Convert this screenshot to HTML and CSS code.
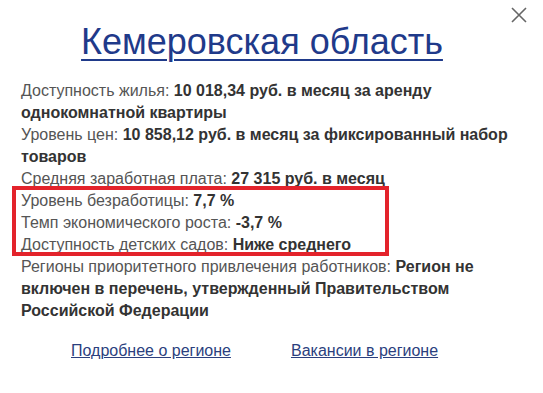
FILE: index.html
```html
<!DOCTYPE html>
<html lang="ru">
<head>
<meta charset="utf-8">
<link rel="stylesheet" href="styles.css">
</head>
<body>
<div class="popup">
  <button class="close" aria-label="Закрыть">
    <svg width="16" height="16" viewBox="0 0 16 16"><path d="M1 1L15 15M15 1L1 15" stroke="#666" stroke-width="1.6" fill="none"/></svg>
  </button>
  <h1 class="title"><a href="#">Кемеровская область</a></h1>
  <div class="info">
    <p class="row">Доступность жилья: <b>10 018,34 руб. в месяц за аренду однокомнатной квартиры</b></p>
    <p class="row">Уровень цен: <b>10 858,12 руб. в месяц за фиксированный набор товаров</b></p>
    <p class="row">Средняя заработная плата: <b>27 315 руб. в месяц</b></p>
    <p class="row">Уровень безработицы: <b>7,7 %</b></p>
    <p class="row">Темп экономического роста: <b>-3,7 %</b></p>
    <p class="row">Доступность детских садов: <b>Ниже среднего</b></p>
    <p class="row">Регионы приоритетного привлечения работников: <b>Регион не включен в перечень, утвержденный Правительством Российской Федерации</b></p>
    <div class="highlight"></div>
  </div>
  <div class="links">
    <a href="#">Подробнее о регионе</a>
    <a href="#">Вакансии в регионе</a>
  </div>
</div>
</body>
</html>
```
FILE: styles.css
```css
* { box-sizing: border-box; }
html, body { margin: 0; padding: 0; background: #fff; }
body { font-family: "Liberation Sans", Arial, sans-serif; }
.popup {
  position: relative;
  width: 543px;
  height: 393px;
  padding: 21px 20px 0 21px;
}
.close {
  position: absolute;
  top: 7px;
  right: 16px;
  width: 16px;
  height: 16px;
  padding: 0;
  border: 0;
  background: none;
  cursor: pointer;
}
.close svg { display: block; }
.title {
  margin: 0;
  padding-right: 20px;
  text-align: center;
  font-weight: normal;
  font-size: 36px;
  line-height: 42px;
}
.title a { color: #1f3a8a; text-decoration: underline; text-decoration-thickness: 2px; text-underline-offset: 5px; }
.info { position: relative; margin-top: 17px; font-size: 16px; line-height: 22px; color: #555; }
.row { margin: 0; }
.row b { color: #333; }
.highlight {
  position: absolute;
  left: -9px;
  top: 106px;
  width: 377px;
  height: 70px;
  border: 4px solid #e3232b;
  pointer-events: none;
}
.links {
  display: flex;
  gap: 60px;
  padding-left: 50px;
  margin-top: 18px;
  font-size: 16px;
  line-height: 22px;
}
.links a { color: #2b3f7e; text-decoration: underline; }
```
